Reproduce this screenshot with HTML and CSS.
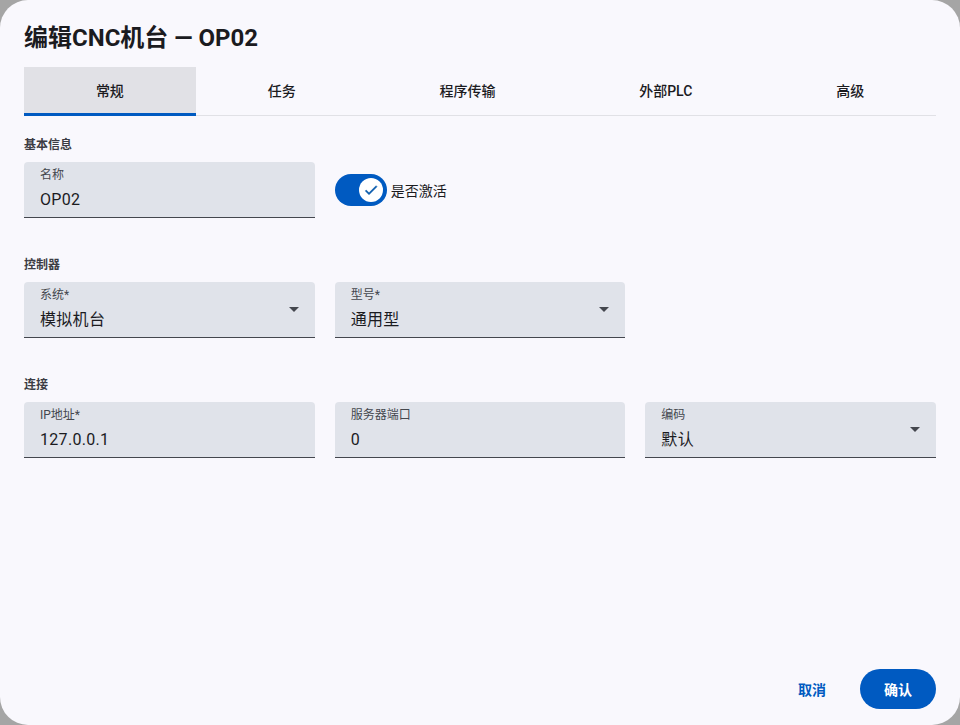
FILE: index.html
```html
<!DOCTYPE html>
<html lang="zh">
<head>
  <meta charset="UTF-8">
  <meta name="viewport" content="width=device-width, initial-scale=1.0">
  <title>编辑CNC机台</title>
  <link rel="stylesheet" href="styles.css">
</head>
<body>
  <div class="dialog">
    <h1 class="title">编辑CNC机台 — OP02</h1>

    <div class="tabs">
      <div class="tab active">常规</div>
      <div class="tab">任务</div>
      <div class="tab">程序传输</div>
      <div class="tab">外部PLC</div>
      <div class="tab">高级</div>
    </div>

    <div class="section">
      <h2>基本信息</h2>
      <div class="row">
        <div class="field">
          <span class="label">名称</span>
          <span class="value">OP02</span>
        </div>
        <div class="switch-wrap">
          <div class="switch">
            <div class="thumb">
              <svg width="16" height="16" viewBox="0 0 24 24"><path d="M9 16.2 4.8 12l-1.4 1.4L9 19 21 7l-1.4-1.4z" fill="#0b5cad" stroke="#0b5cad" stroke-width="0.8"/></svg>
            </div>
          </div>
          <span class="switch-label">是否激活</span>
        </div>
      </div>
    </div>

    <div class="section">
      <h2>控制器</h2>
      <div class="row">
        <div class="field select">
          <span class="label">系统*</span>
          <span class="value">模拟机台</span>
        </div>
        <div class="field select">
          <span class="label">型号*</span>
          <span class="value">通用型</span>
        </div>
      </div>
    </div>

    <div class="section">
      <h2>连接</h2>
      <div class="row">
        <div class="field">
          <span class="label">IP地址*</span>
          <span class="value">127.0.0.1</span>
        </div>
        <div class="field">
          <span class="label">服务器端口</span>
          <span class="value">0</span>
        </div>
        <div class="field select">
          <span class="label">编码</span>
          <span class="value">默认</span>
        </div>
      </div>
    </div>

    <div class="actions">
      <button class="btn-text">取消</button>
      <button class="btn-filled">确认</button>
    </div>
  </div>
</body>
</html>
```

FILE: styles.css
```css
* {
  box-sizing: border-box;
}
html, body {
  height: 100%;
}
body {
  margin: 0;
  background-color: #a5a5a5;
  font-family: Roboto, "Noto Sans CJK SC", sans-serif;
  color: #1b1b1f;
}
.dialog {
  height: 725px;
  background-color: #f9f8fd;
  border-radius: 28px;
  padding: 20px 24px 16px;
  display: flex;
  flex-direction: column;
}
.title {
  margin: 0 0 11px;
  font-size: 24px;
  font-weight: 700;
  line-height: 36px;
  color: #1b1b1f;
}
.tabs {
  display: flex;
  height: 49px;
  border-bottom: 1px solid #e1e1e6;
}
.tab {
  flex: 1 1 auto;
  display: flex;
  align-items: center;
  justify-content: center;
  font-size: 14px;
  font-weight: 500;
  color: #1b1b1f;
  border-bottom: 3px solid transparent;
  margin-bottom: -1px;
}
.tab.active {
  background-color: #e1e1e6;
  border-bottom-color: #005ac1;
}
.section {
  margin-top: 20px;
}
.section + .section {
  margin-top: 38px;
}
h2 {
  margin: 0 0 8px;
  font-size: 12px;
  font-weight: 700;
  line-height: 18px;
  color: #3c3c44;
}
.row {
  display: grid;
  grid-template-columns: repeat(3, 1fr);
  gap: 20px;
}
.field {
  position: relative;
  height: 56px;
  background-color: #e0e3ea;
  border-radius: 4px 4px 0 0;
  border-bottom: 1px solid #44474e;
  padding: 5px 16px 0;
  display: flex;
  flex-direction: column;
}
.label {
  font-size: 12px;
  line-height: 16px;
  color: #44474e;
}
.value {
  margin-top: 5px;
  font-size: 16px;
  line-height: 24px;
  color: #1b1b1f;
  letter-spacing: 0.3px;
}
.field.select::after {
  content: "";
  position: absolute;
  right: 16px;
  top: 25px;
  border-left: 5px solid transparent;
  border-right: 5px solid transparent;
  border-top: 5px solid #44474e;
}
.switch-wrap {
  display: flex;
  align-items: center;
  gap: 4px;
}
.switch {
  width: 52px;
  height: 32px;
  border-radius: 16px;
  background-color: #005ac1;
  display: flex;
  align-items: center;
  justify-content: flex-end;
  padding-right: 4px;
}
.thumb {
  width: 24px;
  height: 24px;
  border-radius: 50%;
  background-color: #fff;
  display: flex;
  align-items: center;
  justify-content: center;
}
.switch-label {
  font-size: 14px;
  color: #1b1b1f;
}
.actions {
  margin-top: auto;
  display: flex;
  justify-content: flex-end;
  align-items: center;
  gap: 18px;
}
button {
  font-family: Roboto, "Noto Sans CJK SC", sans-serif;
  font-size: 14px;
  font-weight: 700;
  height: 40px;
  border: none;
  border-radius: 20px;
  cursor: pointer;
}
.btn-text {
  background: none;
  color: #005ac1;
  padding: 0 16px;
}
.btn-filled {
  background-color: #005ac1;
  color: #fff;
  padding: 0 24px;
}
```
